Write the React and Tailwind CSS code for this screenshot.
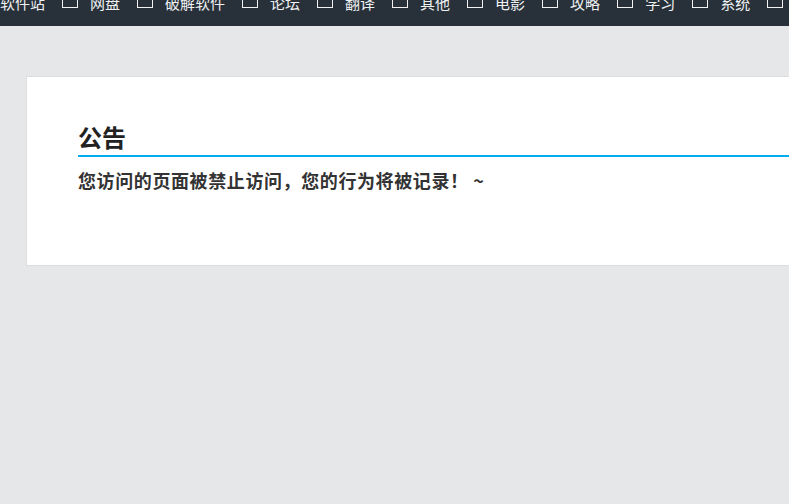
import React from 'react';

const navItems = ['软件站', '网盘', '破解软件', '论坛', '翻译', '其他', '电影', '攻略', '学习', '系统'];

const App = () => {
  return (
    <div
      className="min-h-screen w-full overflow-hidden bg-[#e6e7e9]"
      style={{ fontFamily: '"Noto Sans CJK SC", "Noto Sans", sans-serif' }}
    >
      {/* Top nav (scrolled partly out of view) */}
      <div className="h-[26px] bg-[#28313a] overflow-hidden">
        <ul className="-mt-[8px] flex items-start whitespace-nowrap text-[15px] leading-[22px] text-[#eef0f2]">
          {navItems.map((item) => (
            <li key={item} className="flex items-start shrink-0">
              <span className="mr-[17px]">{item}</span>
              <span className="mr-[12px] block w-[16px] h-[16px] border border-[#f2f2f2]"></span>
            </li>
          ))}
        </ul>
      </div>

      {/* Notice card */}
      <div className="mt-[50px] ml-[26px] w-[1100px] h-[190px] bg-white border border-[#dcdddf] pl-[51px] pr-[40px] pt-[42px]">
        <h2 className="text-[24px] leading-[36px] font-bold text-[#222] border-b-2 border-[#00aeef]">公告</h2>
        <p className="mt-[10px] text-[18px] leading-[27px] font-bold tracking-[0.6px] text-[#333]">
          您访问的页面被禁止访问，您的行为将被记录！ ~
        </p>
      </div>
    </div>
  );
};

export default App;
